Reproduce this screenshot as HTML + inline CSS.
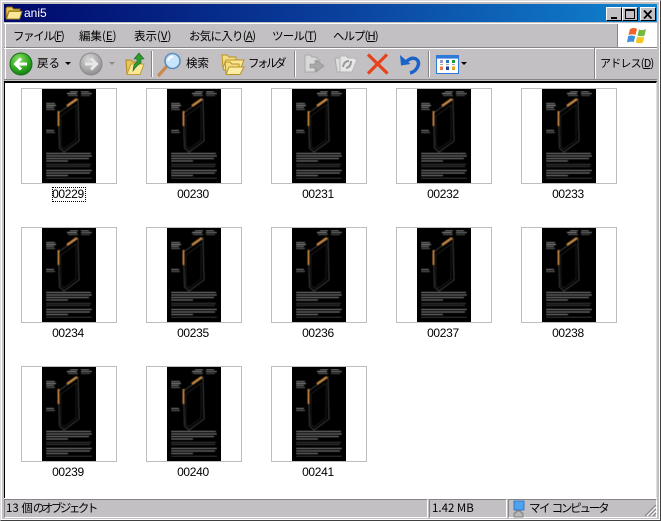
<!DOCTYPE html>
<html><head><meta charset="utf-8"><style>
html,body{margin:0;padding:0}
body{width:661px;height:521px;position:relative;overflow:hidden;background:#c3c0c3;font-family:"Liberation Sans","Noto Sans CJK JP",sans-serif;font-size:12px;color:#000}
.a{position:absolute;white-space:nowrap}
.m{font-family:"WenQuanYi Zen Hei","Noto Sans CJK JP",sans-serif;font-size:11.5px;line-height:14px}
.th{position:absolute;width:96px;height:96px}
.lb{position:absolute;width:96px;text-align:center;font-size:12px;line-height:14px;letter-spacing:-.3px}
.btn{position:absolute;top:7px;width:16px;height:14px;background:#c3c0c3;border:1px solid;border-color:#fff #000 #000 #fff;box-sizing:border-box}
.sep{position:absolute;width:1px;background:#868486;border-right:1px solid #fff}
</style></head><body>
<div class="a" style="left:0;top:0;width:661px;height:521px;box-sizing:border-box;border:1px solid;border-color:#dfdfdf #404040 #404040 #dfdfdf;outline:1px solid #fff;outline-offset:-2px"></div>

<div class="a" style="left:4px;top:4px;width:653px;height:18px;background:linear-gradient(90deg,#00086b 0%,#0a3f9c 50%,#1084d0 100%)"></div>
<svg class="a" style="left:5px;top:5px" width="18" height="16" viewBox="0 0 18 16"><path d="M1 3.5 L2 2 H7 L8.5 4 H15 V6 H4 L1 13Z" fill="#e8c35a" stroke="#8a6d10"/><path d="M1.5 14 L4 6.5 H17 L14.5 14Z" fill="#fbe79a" stroke="#a5851c"/></svg>
<div class="a" style="left:24px;top:5px;color:#fff;font-size:12px;line-height:16px">ani5</div>
<div class="btn" style="left:606px"><div class="a" style="left:4px;top:9px;width:6px;height:2px;background:#000"></div></div>
<div class="btn" style="left:622px"><div class="a" style="left:2px;top:1px;width:10px;height:10px;box-sizing:border-box;border:1px solid #000;border-top-width:2px"></div></div>
<div class="btn" style="left:640px"><svg class="a" style="left:2px;top:2px" width="10" height="9"><path d="M1 0.5 L8.5 8.5 M8.5 0.5 L1 8.5" stroke="#000" stroke-width="1.8"/></svg></div>

<div class="a" style="left:4px;top:23px;width:653px;height:1px;background:#fff"></div>
<div class="a" style="left:4px;top:47px;width:653px;height:1px;background:#868486"></div>
<div class="a" style="left:4px;top:48px;width:653px;height:1px;background:#fff"></div>
<div class="a" style="left:5px;top:24px;width:1px;height:55px;background:#fff"></div>
<div class="a m" style="left:13px;top:29px;letter-spacing:-1.4px">ファイル(<u>F</u>)</div>
<div class="a m" style="left:79px;top:29px">編集(<u>E</u>)</div>
<div class="a m" style="left:134px;top:29px">表示(<u>V</u>)</div>
<div class="a m" style="left:189px;top:29px;letter-spacing:-.75px">お気に入り(<u>A</u>)</div>
<div class="a m" style="left:272px;top:29px;letter-spacing:-.8px">ツール(<u>T</u>)</div>
<div class="a m" style="left:333px;top:29px;letter-spacing:-1px">ヘルプ(<u>H</u>)</div>
<div class="a" style="left:617px;top:24px;width:1px;height:23px;background:#868486"></div>
<div class="a" style="left:618px;top:24px;width:39px;height:23px;background:#fff"></div>
<svg class="a" style="left:626px;top:26px" width="24" height="20" viewBox="0 0 24 20"><path d="M4 3 Q8 1 11 3 L9.5 9 Q6.5 7.5 2.5 9Z" fill="#f0622a"/><path d="M13 3.5 Q16.5 5 20 3 L18.5 9.5 Q15 11 11.5 9.5Z" fill="#72b83a"/><path d="M2.2 10 Q6 8.8 9.2 10.2 L7.8 16 Q4.5 15 1 16.5Z" fill="#3f8fdc"/><path d="M11.2 10.5 Q14.5 12 18.2 10.5 L17 16.5 Q13.5 18 9.8 16.5Z" fill="#f6c51f"/></svg>

<!-- toolbar -->
<svg class="a" style="left:9px;top:52px" width="24" height="24" viewBox="0 0 24 24"><defs><radialGradient id="g" cx=".4" cy=".3" r=".8"><stop offset="0" stop-color="#8fe06a"/><stop offset=".6" stop-color="#2ca51d"/><stop offset="1" stop-color="#0d6e10"/></radialGradient><radialGradient id="h" cx=".4" cy=".3" r=".8"><stop offset="0" stop-color="#d8d8d8"/><stop offset="1" stop-color="#858585"/></radialGradient></defs><circle cx="12" cy="12" r="11" fill="url(#g)" stroke="#16701a"/><path d="M18 12 H7 M12 6.5 L6.5 12 L12 17.5" fill="none" stroke="#fff" stroke-width="3"/></svg>
<div class="a m" style="left:37px;top:56px">戻る</div>
<svg class="a" style="left:65px;top:62px" width="7" height="4"><path d="M0 0H6L3 3Z" fill="#000"/></svg>
<svg class="a" style="left:79px;top:52px" width="24" height="24" viewBox="0 0 24 24"><circle cx="12" cy="12" r="11" fill="url(#h)" stroke="#8a8a8a"/><path d="M6 12 H17 M12 6.5 L17.5 12 L12 17.5" fill="none" stroke="#e8e8e8" stroke-width="3"/></svg>
<svg class="a" style="left:109px;top:62px" width="7" height="4"><path d="M0 0H6L3 3Z" fill="#8a8a8a"/></svg>
<svg class="a" style="left:124px;top:52px" width="22" height="24" viewBox="0 0 22 24"><path d="M2 8H7L9 10H16V22H3Z" fill="#e8c35a" stroke="#b08a20"/><path d="M3 22.5 L7 12H20L16 22.5Z" fill="#fbe79a" stroke="#c2a030"/><path d="M9 19 Q9 12 13 10 V7 H10 L15 1 L20 7 H17 V11 Q13 13 9 19Z" fill="#2f9a2e" stroke="#17661c" stroke-width=".6"/></svg>
<div class="sep" style="left:151px;top:51px;height:26px"></div>
<svg class="a" style="left:157px;top:52px" width="26" height="25" viewBox="0 0 26 25"><path d="M2 23 L10 14" stroke="#c98a4a" stroke-width="3.2" stroke-linecap="round"/><circle cx="15.5" cy="9" r="7.5" fill="#c7e6fb" stroke="#5a8fc0" stroke-width="1.6"/><path d="M11 9 Q12 5 16 4.5" stroke="#fff" stroke-width="2" fill="none"/></svg>
<div class="a m" style="left:186px;top:56px">検索</div>
<svg class="a" style="left:221px;top:53px" width="24" height="23" viewBox="0 0 24 23"><path d="M1 2H6L8 4H15V14H2Z" fill="#f4dc86" stroke="#b8941f"/><path d="M2 15 L5 7H23L19 17H3Z" fill="#fbe79a" stroke="#b8941f"/><path d="M4 9H9L11 11H18V20H5Z" fill="#f4dc86" stroke="#b8941f"/><path d="M5 21.5 L8 14H23L19 21.5Z" fill="#fdeca6" stroke="#b8941f"/></svg>
<div class="a m" style="left:248px;top:56px;letter-spacing:-2.5px">フォルダ</div>
<div class="sep" style="left:294px;top:51px;height:26px"></div>
<svg class="a" style="left:303px;top:53px" width="22" height="22" viewBox="0 0 22 22"><path d="M2 2H7L9 4H13L17 8H12V19H2Z" fill="#d8d8d8" stroke="#a8a8a8"/><path d="M7 11H13V7L21 13L13 19V15H7Z" fill="#a8a8a8" stroke="#8c8c8c" stroke-width=".6"/></svg>
<svg class="a" style="left:334px;top:53px" width="24" height="22" viewBox="0 0 24 22"><path d="M1 5H7L9 7H12V19H3Z" fill="#dcdcdc" stroke="#ababab"/><path d="M6 3H12L14 5H20L23 7L18 19H6Z" fill="#e6e6e6" stroke="#b4b4b4"/><path d="M9 14 Q10 8 15 8 M17 8 Q17 14 12 15" fill="none" stroke="#9a9a9a" stroke-width="2"/></svg>
<svg class="a" style="left:366px;top:53px" width="24" height="22" viewBox="0 0 24 22"><path d="M2 1.5 L21.5 20.5 M21 1.5 L2 20.5" stroke="#e8401c" stroke-width="3.2"/></svg>
<svg class="a" style="left:398px;top:53px" width="24" height="22" viewBox="0 0 24 22"><path d="M7.5 9.5 Q13 3.5 18 6 Q22.5 9 19 15 Q16.5 19 12 20" fill="none" stroke="#1a63c9" stroke-width="3.4"/><path d="M2 2 L3 12.5 L12.5 11Z" fill="#1a63c9"/></svg>
<div class="sep" style="left:428px;top:51px;height:26px"></div>
<svg class="a" style="left:436px;top:55px" width="24" height="19" viewBox="0 0 24 19"><rect x=".5" y=".5" width="22" height="18" fill="#fff" stroke="#2f7ad8"/><rect x="1" y="1" width="21" height="2.6" fill="#2f7ad8"/><g><rect x="4" y="5" width="3" height="3" fill="#9a9ac8"/><rect x="10" y="5" width="3" height="3" fill="#2f6fc0"/><rect x="16" y="5" width="3" height="3" fill="#159a3a"/><rect x="4" y="9" width="3" height="1" fill="#aaa"/><rect x="10" y="9" width="3" height="1" fill="#aaa"/><rect x="16" y="9" width="3" height="1" fill="#aaa"/><rect x="4" y="11.5" width="3" height="3.5" fill="#f07b4a"/><rect x="10" y="11.5" width="3" height="3.5" fill="#1c3f9c"/><rect x="16" y="11.5" width="3" height="3.5" fill="#e0a818"/></g></svg>
<svg class="a" style="left:461px;top:62px" width="7" height="4"><path d="M0 0H6L3 3Z" fill="#000"/></svg>
<div class="a" style="left:594px;top:48px;width:1px;height:31px;background:#868486"></div>
<div class="a" style="left:595px;top:48px;width:1px;height:31px;background:#fff"></div>
<div class="a m" style="left:600px;top:56px;font-size:11px;letter-spacing:-.8px">アドレス(<u>D</u>)</div>
<div class="a" style="left:4px;top:79px;width:653px;height:1px;background:#868486"></div>

<!-- content -->
<div class="a" style="left:4px;top:81px;width:653px;height:417px;background:#fff;box-sizing:border-box;border-top:2px solid #000;border-left:1px solid #000;border-right:1px solid #dfdfdf"></div>

<svg width="0" height="0" style="position:absolute"><defs><filter id="b" x="0" y="0" width="1" height="1"><feGaussianBlur stdDeviation=".45"/></filter><g id="t">
<rect x=".5" y=".5" width="95" height="95" fill="#fff" stroke="#bdbdbd"/>
<rect x="21" y="1" width="54" height="94" fill="#000"/>
<g filter="url(#b)">
<path d="M37.5 25 L57 11 L58 53 L43 64 L38.5 60Z" fill="none" stroke="#5a5a5a" stroke-width=".7"/>
<path d="M40 28 L55 17 V52 L43 61 L40 58Z" fill="none" stroke="#2e2e2e" stroke-width=".6"/>
<path d="M37.5 23 V38" stroke="#c98a45" stroke-width="1.8"/>
<path d="M46 18 L56 11" stroke="#c98a45" stroke-width="2.4"/>
<g fill="#8a8a8a">
<rect x="49" y="3" width="8" height="1"/><rect x="46" y="5" width="10" height="1" fill="#aaa"/><rect x="47" y="7" width="10" height="1" fill="#666"/>
<rect x="60" y="3" width="8" height="1"/><rect x="60" y="5" width="11" height="1"/><rect x="60" y="7" width="9" height="1" fill="#555"/>
<rect x="25" y="15" width="9" height="1"/><rect x="25" y="17" width="10" height="1" fill="#aaa"/><rect x="25" y="19" width="8" height="1"/><rect x="25" y="21" width="9" height="1" fill="#666"/>
<rect x="25" y="42" width="8" height="1"/><rect x="25" y="44" width="9" height="1" fill="#666"/>
</g>
<g fill="#8c8c8c">
<rect x="25" y="65" width="45" height="1"/><rect x="25" y="67.5" width="46" height="1"/><rect x="25" y="70" width="43" height="1"/><rect x="25" y="72.5" width="22" height="1"/>
<rect x="25" y="76" width="45" height=".8" fill="#4e4e4e"/><rect x="25" y="78" width="44" height=".8" fill="#4e4e4e"/>
<rect x="25" y="82" width="46" height="1"/><rect x="25" y="84.5" width="44" height="1"/><rect x="25" y="87" width="22" height="1"/>
<rect x="25" y="90" width="46" height=".8" fill="#4e4e4e"/>
</g>
</g>
</g></defs></svg>

<svg class="th" style="left:21px;top:88px"><use href="#t"/></svg>
<svg class="th" style="left:146px;top:88px"><use href="#t"/></svg>
<svg class="th" style="left:271px;top:88px"><use href="#t"/></svg>
<svg class="th" style="left:396px;top:88px"><use href="#t"/></svg>
<svg class="th" style="left:521px;top:88px"><use href="#t"/></svg>
<svg class="th" style="left:21px;top:227px"><use href="#t"/></svg>
<svg class="th" style="left:146px;top:227px"><use href="#t"/></svg>
<svg class="th" style="left:271px;top:227px"><use href="#t"/></svg>
<svg class="th" style="left:396px;top:227px"><use href="#t"/></svg>
<svg class="th" style="left:521px;top:227px"><use href="#t"/></svg>
<svg class="th" style="left:21px;top:366px"><use href="#t"/></svg>
<svg class="th" style="left:146px;top:366px"><use href="#t"/></svg>
<svg class="th" style="left:271px;top:366px"><use href="#t"/></svg>

<div class="lb" style="left:20px;top:187px">00229</div>
<div class="a" style="left:52px;top:187px;width:34px;height:15px;box-sizing:border-box;border:1px dotted #000"></div>
<div class="lb" style="left:145px;top:187px">00230</div>
<div class="lb" style="left:270px;top:187px">00231</div>
<div class="lb" style="left:395px;top:187px">00232</div>
<div class="lb" style="left:520px;top:187px">00233</div>
<div class="lb" style="left:20px;top:326px">00234</div>
<div class="lb" style="left:145px;top:326px">00235</div>
<div class="lb" style="left:270px;top:326px">00236</div>
<div class="lb" style="left:395px;top:326px">00237</div>
<div class="lb" style="left:520px;top:326px">00238</div>
<div class="lb" style="left:20px;top:465px">00239</div>
<div class="lb" style="left:145px;top:465px">00240</div>
<div class="lb" style="left:270px;top:465px">00241</div>

<!-- status -->
<div class="a" style="left:4px;top:498px;width:653px;height:1px;background:#fff"></div>
<div class="a" style="left:4px;top:499px;width:424px;height:19px;box-sizing:border-box;border:1px solid;border-color:#868486 #fff #fff #868486"></div>
<div class="a" style="left:429px;top:499px;width:78px;height:19px;box-sizing:border-box;border:1px solid;border-color:#868486 #fff #fff #868486"></div>
<div class="a" style="left:508px;top:499px;width:149px;height:19px;box-sizing:border-box;border:1px solid;border-color:#868486 #fff #fff #868486"></div>
<div class="a m" style="left:6px;top:501px;font-size:11.5px">13 個<span style="letter-spacing:-2.5px">のオブジェクト</span></div>
<div class="a m" style="left:432px;top:501px;font-size:11.5px">1.42 MB</div>
<svg class="a" style="left:511px;top:500px" width="15" height="18" viewBox="0 0 15 18"><path d="M3 1H13V10H3Z" fill="#4ea2f0" stroke="#1f6cc8" stroke-width=".8"/><path d="M5 11H10V13H12V17H3V13H5Z" fill="#b8b8b8" stroke="#6a6a6a" stroke-width=".7"/></svg>
<div class="a m" style="left:529px;top:501px;font-size:11.5px"><span style="letter-spacing:-1.5px">マイ</span>&nbsp;<span style="letter-spacing:-2.2px">コンピュータ</span></div>
<svg class="a" style="left:644px;top:504px" width="13" height="13"><path d="M12 1 L1 12 M12 5 L5 12 M12 9 L9 12" stroke="#868486" stroke-width="1.2"/><path d="M12 3 L3 12 M12 7 L7 12" stroke="#fff" stroke-width="1"/></svg>
</body></html>
